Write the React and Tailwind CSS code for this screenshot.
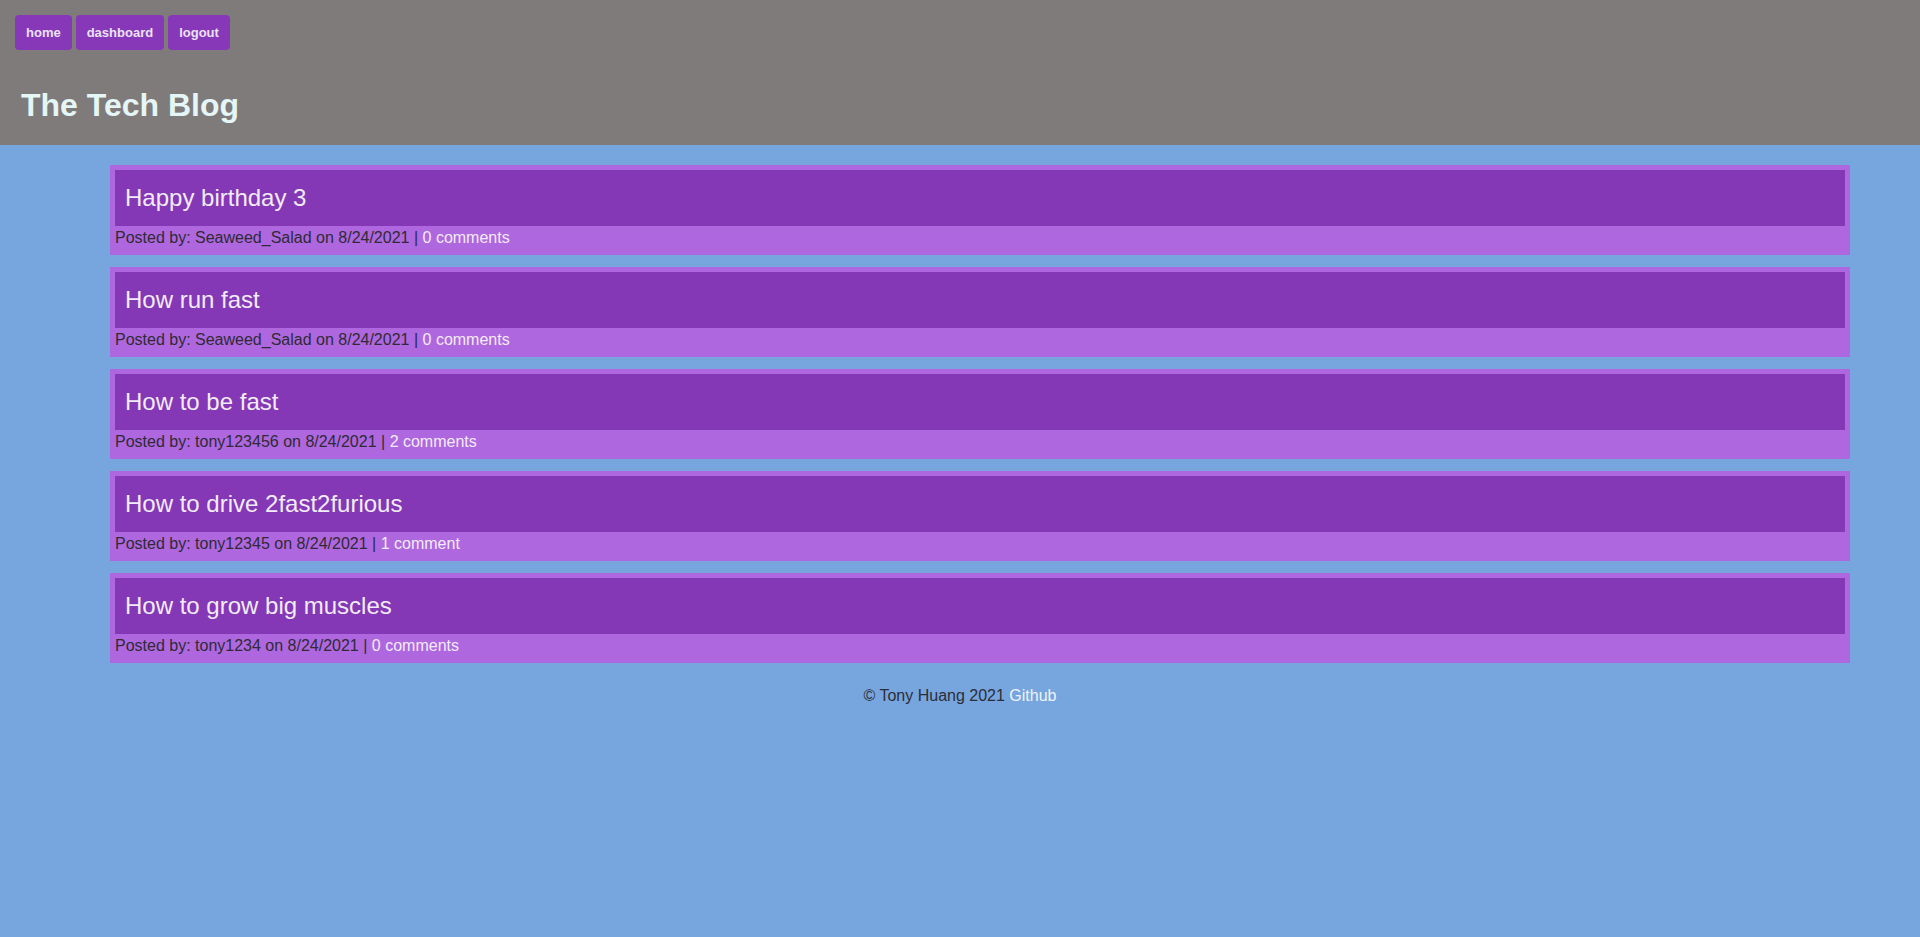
const posts = [
  { title: "Happy birthday 3", user: "Seaweed_Salad", date: "8/24/2021", comments: "0 comments" },
  { title: "How run fast", user: "Seaweed_Salad", date: "8/24/2021", comments: "0 comments" },
  { title: "How to be fast", user: "tony123456", date: "8/24/2021", comments: "2 comments" },
  { title: "How to drive 2fast2furious", user: "tony12345", date: "8/24/2021", comments: "1 comment" },
  { title: "How to grow big muscles", user: "tony1234", date: "8/24/2021", comments: "0 comments" },
];

export default function App() {
  return (
    <div
      className="min-h-screen bg-[#77a5de]"
      style={{ fontFamily: '"Liberation Sans", Arial, sans-serif' }}
    >
      <header className="h-[145px] bg-[#7f7b7b] pt-[15px]">
        <nav className="flex gap-[4px] pl-[15px]">
          {["home", "dashboard", "logout"].map((item) => (
            <a
              key={item}
              href="#"
              className="flex h-[35px] items-center rounded-[4px] bg-[#8638b9] px-[11px] text-[13px] font-bold text-[#ece2f6]"
            >
              {item}
            </a>
          ))}
        </nav>
        <h1 className="mt-[37px] pl-[21px] text-[32px] font-bold leading-[37px] text-[#e4f6f6]">
          The Tech Blog
        </h1>
      </header>

      <main className="ml-[110px] flex w-[1740px] flex-col gap-[12px] pt-[20px]">
        {posts.map((post) => (
          <div key={post.title} className="bg-[#ae67de] p-[5px]">
            <div className="flex h-[56px] items-center bg-[#8438b5] px-[10px]">
              <h2 className="text-[24px] leading-[28px] text-[#f2ecf8]">{post.title}</h2>
            </div>
            <p className="h-[24px] text-[16px] leading-[24px] text-[#2f2a35]">
              Posted by: {post.user} on {post.date} |{" "}
              <a href="#" className="text-[#f3ecf8]">
                {post.comments}
              </a>
            </p>
          </div>
        ))}
      </main>

      <footer className="pt-[21px] text-center text-[16px] text-[#2b2e36]">
        © Tony Huang 2021{" "}
        <a href="#" className="text-[#eef4fb]">
          Github
        </a>
      </footer>
    </div>
  );
}
